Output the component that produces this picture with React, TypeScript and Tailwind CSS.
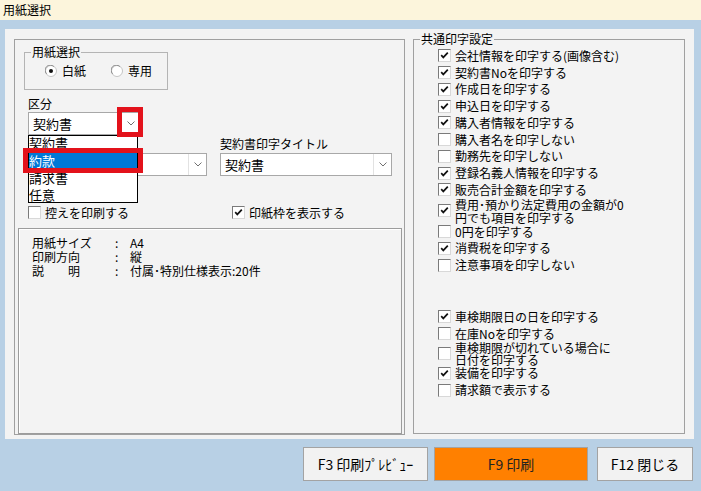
import type { ReactNode } from 'react'

type Item = [string, boolean]

const commonItems: Item[] = [
    ['会社情報を印字する(画像含む)', true],
    ['契約書Noを印字する', true],
    ['作成日を印字する', true],
    ['申込日を印字する', true],
    ['購入者情報を印字する', true],
    ['購入者名を印字しない', false],
    ['勤務先を印字しない', false],
    ['登録名義人情報を印字する', true],
    ['販売合計金額を印字する', true],
    ['費用･預かり法定費用の金額が0\n円でも項目を印字する', true],
    ['0円を印字する', false],
    ['消費税を印字する', true],
    ['注意事項を印字しない', false],
]

const vehicleItems: Item[] = [
    ['車検期限日の日を印字する', true],
    ['在庫Noを印字する', false],
    ['車検期限が切れている場合に\n日付を印字する', false],
    ['装備を印字する', true],
    ['請求額で表示する', false],
]

const Box = ({ on }: { on: boolean }) => (
    <div className="w-[13px] h-[13px] shrink-0 bg-white border border-t-[#7a7a7a] border-l-[#7a7a7a] border-b-[#d8d8d8] border-r-[#d8d8d8]">
        {on && (
            <svg width="11" height="11" viewBox="0 0 11 11">
                <path d="M2.2 5.2 L4.3 7.4 L8.8 2.6" fill="none" stroke="#111" strokeWidth="1.7" />
            </svg>
        )}
    </div>
)

const Radio = ({ on }: { on: boolean }) => (
    <svg width="12" height="12" viewBox="0 0 12 12" className="shrink-0">
        <circle cx="6" cy="6" r="5.5" fill="#fff" stroke="#c4c4c4" />
        <path d="M1.6 8.8 A5 5 0 0 1 8.8 1.6" fill="none" stroke="#8a8a8a" />
        {on && <circle cx="6" cy="6" r="2" fill="#111" />}
    </svg>
)

const Chevron = () => (
    <svg width="8" height="5" viewBox="0 0 8 5">
        <path d="M0.5 0.5 L4 4 L7.5 0.5" fill="none" stroke="#707070" strokeWidth="1" />
    </svg>
)

const Combo = ({ value, w }: { value?: string; w: string }) => (
    <div className={`${w} h-[23px] flex bg-white border border-[#a8a8a8]`}>
        <div className="flex-1 pl-[4px] text-[13px] leading-[21px]">{value}</div>
        <div className="w-[18px] flex items-center justify-center border-l border-[#e2e2e2]">
            <Chevron />
        </div>
    </div>
)

const CheckRow = ({ on, label, h }: { on: boolean; label: string; h: string }) => (
    <div className={`${h} flex items-center`}>
        <Box on={on} />
        <div className="ml-[4px] whitespace-pre text-[12px]">{label}</div>
    </div>
)

const GroupTitle = ({ children }: { children: ReactNode }) => (
    <div className="absolute -top-[8px] left-[6px] px-[1px] bg-[#f3f3f3] text-[12px] leading-[14px]">
        {children}
    </div>
)

const rowHeight = (label: string, i: number) => {
    if (!label.includes('\n')) return 'h-[16.75px] leading-[14px]'
    return i === 0 ? 'h-[25px] leading-[13px]' : 'h-[23px] leading-[12px]'
}

export default function App() {
    return (
        <div className="w-[701px] h-[491px] bg-[#b8d0e5] flex flex-col text-black font-['Noto_Sans_CJK_JP','Noto_Sans',sans-serif]">
            <div className="h-[20px] bg-[#fcf5dc] px-[3px] text-[12px] leading-[20px]">用紙選択</div>

            <div className="ml-[5px] mt-[9px] w-[689px] h-[410px] bg-[#f3f3f3] flex pl-[9px] pt-[10px]">
                {/* left group */}
                <div className="relative w-[391px] h-[396px] border border-[#a0a0a0] flex flex-col">
                    <div className="relative ml-[9px] mt-[12px] w-[144px] h-[38px] border border-[#b4b4b4]">
                        <GroupTitle>用紙選択</GroupTitle>
                        <div className="flex items-center h-full pl-[20px] text-[12px] leading-[14px]">
                            <Radio on={true} />
                            <span className="ml-[5px]">白紙</span>
                            <div className="ml-[25px]">
                                <Radio on={false} />
                            </div>
                            <span className="ml-[5px]">専用</span>
                        </div>
                    </div>

                    <div className="ml-[13px] mt-[8px] text-[12px] leading-[12px]">区分</div>
                    <div className="ml-[13px] mt-[2px]">
                        <Combo value="契約書" w="w-[112px]" />
                    </div>

                    <div className="ml-[13px] mt-[3px] flex">
                        <div className="w-[179px] pt-[15px]">
                            <Combo w="w-[179px]" />
                        </div>
                        <div className="ml-[13px]">
                            <div className="h-[12px] text-[12px] leading-[12px]">契約書印字タイトル</div>
                            <div className="mt-[3px]">
                                <Combo value="契約書" w="w-[172px]" />
                            </div>
                        </div>
                    </div>

                    <div className="ml-[13px] mt-[30px] flex items-center h-[13px] text-[12px] leading-[13px]">
                        <Box on={false} />
                        <span className="ml-[4px]">控えを印刷する</span>
                        <div className="ml-[103px]">
                            <Box on={true} />
                        </div>
                        <span className="ml-[4px]">印紙枠を表示する</span>
                    </div>

                    <div className="ml-[3px] mt-[9px] w-[384px] h-[206px] border border-[#9c9c9c] shadow-[inset_1px_1px_0_#fff] pl-[13px] pt-[7px] text-[12px] leading-[14px]">
                        {[
                            ['用紙サイズ', 'A4'],
                            ['印刷方向', '縦'],
                            ['説　　明', '付属･特別仕様表示:20件'],
                        ].map(([k, v]) => (
                            <div key={k} className="flex whitespace-pre">
                                <span className="w-[83px]">{k}</span>
                                <span className="w-[15px]">:</span>
                                <span>{v}</span>
                            </div>
                        ))}
                    </div>

                    {/* open dropdown list */}
                    <div className="absolute left-[13px] top-[95px] w-[110px] h-[68px] bg-white border border-black text-[13px] leading-[17px]">
                        <div className="h-[16px] leading-[14px]">契約書</div>
                        <div className="h-[17px] bg-[#0078d7] text-white">約款</div>
                        <div className="h-[17px]">請求書</div>
                        <div className="h-[17px]">任意</div>
                    </div>
                    <div className="absolute left-[102px] top-[67px] w-[26px] h-[30px] border-[5px] border-[#e3121b]" />
                    <div className="absolute left-[8px] top-[108px] w-[120px] h-[25px] border-[5px] border-[#e3121b]" />
                </div>

                {/* right group */}
                <div className="relative ml-[8px] w-[272px] h-[395px] border border-[#a0a0a0] pl-[24px] pt-[7.6px]">
                    <GroupTitle>共通印字設定</GroupTitle>
                    {commonItems.map(([label, on]) => (
                        <CheckRow key={label} on={on} label={label} h={rowHeight(label, 0)} />
                    ))}
                    <div className="h-[35px]" />
                    {vehicleItems.map(([label, on]) => (
                        <CheckRow key={label} on={on} label={label} h={rowHeight(label, 1)} />
                    ))}
                </div>
            </div>

            <div className="mt-[8px] flex justify-end pr-[8px] text-[14px]">
                <button className="w-[125px] h-[34px] bg-[#f2f2f2] border border-[#a3a3a3]">F3 印刷ﾌﾟﾚﾋﾞｭｰ</button>
                <button className="ml-[6px] w-[154px] h-[34px] bg-[#ff8000] border border-[#a3a3a3] text-[#222]">F9 印刷</button>
                <button className="ml-[9px] w-[96px] h-[34px] bg-[#f2f2f2] border border-[#a3a3a3]">F12 閉じる</button>
            </div>
        </div>
    )
}
